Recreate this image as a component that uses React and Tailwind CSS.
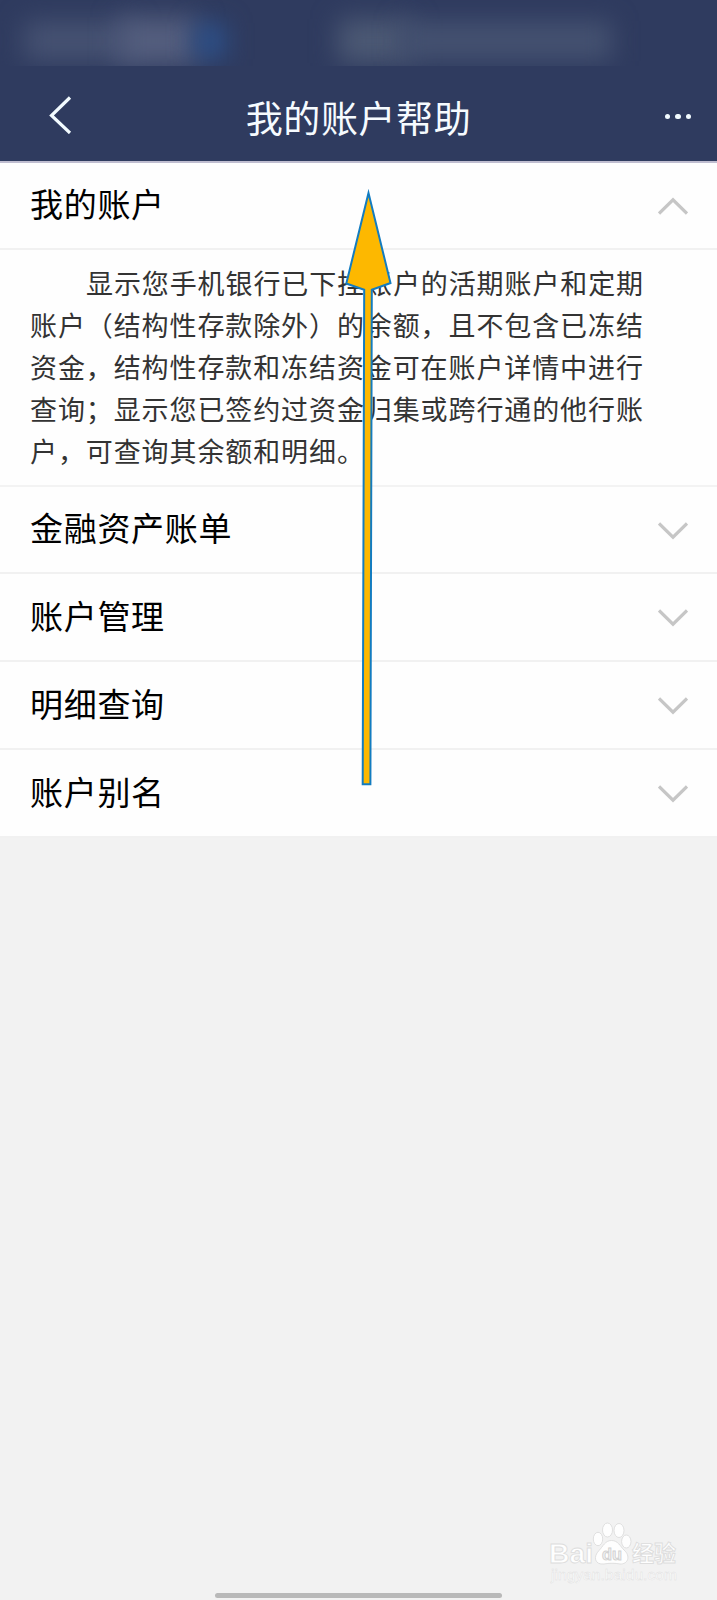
import { useState } from "react";

const sections = [
  {
    title: "我的账户",
    height: "h-[87px]",
    content:
      "显示您手机银行已下挂账户的活期账户和定期账户（结构性存款除外）的余额，且不包含已冻结资金，结构性存款和冻结资金可在账户详情中进行查询；显示您已签约过资金归集或跨行通的他行账户，可查询其余额和明细。",
  },
  { title: "金融资产账单", height: "h-[87px]" },
  { title: "账户管理", height: "h-[88px]" },
  { title: "明细查询", height: "h-[88px]" },
  { title: "账户别名", height: "h-[88px]" },
];

const StatusBar = () => (
  <div className="h-[66px] overflow-hidden flex items-center pt-4">
    <div className="ml-6 w-[110px] h-10 bg-[#465272] blur-[13px]" />
    <div className="-ml-4 w-[80px] h-12 bg-[#545e7e] blur-[13px]" />
    <div className="-ml-1 w-8 h-9 bg-[#2c4f88] blur-[12px]" />
    <div className="ml-[112px] w-[74px] h-11 bg-[#4c5974] blur-[13px]" />
    <div className="-ml-3 w-[212px] h-10 bg-[#445170] blur-[12px]" />
  </div>
);

const NavBar = () => (
  <div className="h-[95px] flex items-center pt-[3px]">
    <button className="w-[120px] pl-[49px]" aria-label="返回">
      <svg width="23" height="38" viewBox="0 0 23 38" fill="none" stroke="#f2fbff" strokeWidth="3.2">
        <path d="M21 1.5L2.5 19.5L21 37" />
      </svg>
    </button>
    <h1 className="flex-1 pt-[3px] text-center text-[37px] tracking-[0.6px] leading-[48px] text-[#f6fbff]">
      我的账户帮助
    </h1>
    <button className="w-[120px] flex justify-end gap-[5px] pt-[3px] pr-[26px]" aria-label="更多">
      <span className="size-[5.5px] rounded-full bg-[#f2fbff]" />
      <span className="size-[5.5px] rounded-full bg-[#f2fbff]" />
      <span className="size-[5.5px] rounded-full bg-[#f2fbff]" />
    </button>
  </div>
);

const Chevron = ({ open }) => (
  <svg
    className={open ? "rotate-180" : "mt-[2px]"}
    width="30"
    height="18"
    viewBox="0 0 30 18"
    fill="none"
    stroke="#c6c6c6"
    strokeWidth="3.2"
  >
    <path d="M1 1.5L15 15.2L29 1.5" />
  </svg>
);

const Section = ({ section, open, onToggle }) => (
  <div>
    <button
      onClick={onToggle}
      className={`${section.height} w-full flex items-center justify-between pl-[30px] pr-[29px] border-b-2 border-[#f1f1f1]`}
    >
      <span className="pb-[5px] text-[33px] tracking-[0.7px] leading-[44px] text-black">
        {section.title}
      </span>
      <Chevron open={open} />
    </button>
    {open && section.content && (
      <p className="h-[237px] pt-[12px] pl-[30px] pr-[68px] border-b-2 border-[#f3f3f3] indent-[56px] text-[27px] tracking-[0.9px] leading-[41.9px] text-[#333]">
        {section.content}
      </p>
    )}
  </div>
);

// swipe-up hint drawn over the list
const SwipeArrow = () => (
  <svg
    className="absolute left-[340px] top-[185px] pointer-events-none"
    width="56"
    height="606"
    viewBox="340 185 56 606"
  >
    <path
      d="M368.5 193L390.5 283L371.8 289.7L370.4 784.3H362.7L364.2 289.7L346.3 283.5Z"
      fill="#fdb800"
      stroke="#137cc0"
      strokeWidth="2"
      strokeMiterlimit="8"
    />
  </svg>
);

const Watermark = () => (
  <svg
    className="absolute left-[540px] top-[1516px] pointer-events-none font-['Liberation_Sans','Noto_Sans_CJK_SC',sans-serif]"
    width="150"
    height="72"
    viewBox="0 0 150 72"
    fill="#fefefe"
    stroke="#dddddd"
    strokeWidth="0.9"
  >
    <text x="9" y="46.5" fontSize="28.5" fontWeight="700" textLength="44" lengthAdjust="spacingAndGlyphs">
      Bai
    </text>
    <ellipse cx="58" cy="23" rx="4.7" ry="6.7" />
    <ellipse cx="67.5" cy="14" rx="5" ry="7" />
    <ellipse cx="79" cy="14.5" rx="5" ry="7" />
    <ellipse cx="86.3" cy="25.5" rx="4.7" ry="6.5" />
    <path d="M71.5 24.5C78 24.5 80 30 84 34C91 40 88 48.5 80 48C75 47 69 47 64 48C54.5 49 53 40.5 59 34.5C63 30.5 65 24.5 71.5 24.5Z" />
    <text x="62" y="44" fontSize="16.5" fontWeight="700" fill="#f2f2f2" stroke="#d2d2d2" textLength="20" lengthAdjust="spacingAndGlyphs">
      du
    </text>
    <text x="92" y="45" fontSize="22" fontWeight="700" textLength="44">
      经验
    </text>
    <text x="11" y="64" fontSize="14.5" strokeWidth="0.4" textLength="126" lengthAdjust="spacingAndGlyphs">
      jingyan.baidu.com
    </text>
  </svg>
);

export default function App() {
  const [openIndex, setOpenIndex] = useState(0);

  return (
    <div className="relative w-full h-[1600px] overflow-hidden flex flex-col bg-[#f2f2f2] font-['Noto_Sans_CJK_SC',sans-serif]">
      <header className="bg-[#2f3b5f] border-b-2 border-[#bfbdd0]">
        <StatusBar />
        <NavBar />
      </header>

      <main className="flex-1">
        <div className="bg-[#fefefe]">
          {sections.map((section, i) => (
            <Section
              key={section.title}
              section={section}
              open={openIndex === i}
              onToggle={() => setOpenIndex(openIndex === i ? -1 : i)}
            />
          ))}
        </div>
      </main>

      {/* home indicator */}
      <div className="mx-auto mb-[2px] w-[287px] h-[5px] rounded-full bg-[#b9b9b9]" />

      <SwipeArrow />
      <Watermark />
    </div>
  );
}
